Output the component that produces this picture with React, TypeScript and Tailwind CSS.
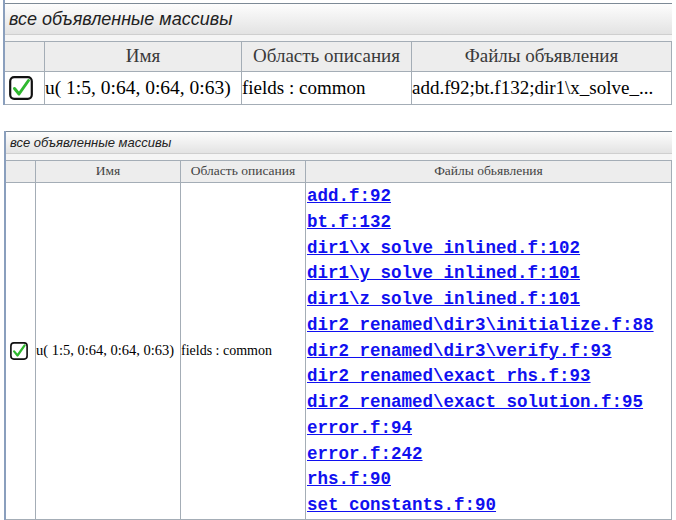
import React from "react";

const links = [
  "add.f:92",
  "bt.f:132",
  "dir1\\x_solve_inlined.f:102",
  "dir1\\y_solve_inlined.f:101",
  "dir1\\z_solve_inlined.f:101",
  "dir2_renamed\\dir3\\initialize.f:88",
  "dir2_renamed\\dir3\\verify.f:93",
  "dir2_renamed\\exact_rhs.f:93",
  "dir2_renamed\\exact_solution.f:95",
  "error.f:94",
  "error.f:242",
  "rhs.f:90",
  "set_constants.f:90",
];

function Check({ size }: { size: number }) {
  return (
    <svg width={size} height={size} viewBox="0 0 24 24">
      <rect x="1.2" y="1.2" width="21.6" height="21.6" rx="4" fill="white" stroke="#111" strokeWidth="2.2" />
      <path d="M5.5 12.5 L10 18 L19.5 4.5" fill="none" stroke="#2fb82f" strokeWidth="3" strokeLinecap="round" strokeLinejoin="round" />
    </svg>
  );
}

export default function App() {
  return (
    <div className="w-[676px] h-[520px] bg-white overflow-hidden relative font-['Liberation_Serif',serif]">
      {/* Top panel */}
      <div className="ml-[3px] w-[669px] border-l-2 border-[#8a9fbd]">
        <div className="h-[3px] bg-white" />
        <div className="h-[31px] border-t border-[#7d8a96] bg-gradient-to-b from-[#fdfdfd] to-[#e3e3e3] flex items-center pl-[4px]">
          <span className="italic text-[18px] text-[#222] font-['Liberation_Sans',sans-serif]">
            все объявленные массивы
          </span>
        </div>
        <div className="h-[7px] border-t border-[#cfcfcf] bg-[#f5f5f5]" />
        <div className="grid grid-cols-[40px_197px_170px_260px] border-t border-[#a4adb6] font-['Liberation_Serif',serif]">
          <div className="h-[30px] bg-[#ededed] border-r border-b border-[#a4adb6]" />
          <div className="h-[30px] bg-[#ededed] border-r border-b border-[#a4adb6] flex items-center justify-center text-[19px] text-[#3a3a3a] font-['Liberation_Serif',serif]">Имя</div>
          <div className="h-[30px] bg-[#ededed] border-r border-b border-[#a4adb6] flex items-center justify-center text-[19px] text-[#3a3a3a] whitespace-nowrap overflow-hidden font-['Liberation_Serif',serif]">Область описания</div>
          <div className="h-[30px] bg-[#ededed] border-r border-b border-[#a4adb6] flex items-center justify-center text-[19px] text-[#3a3a3a] font-['Liberation_Serif',serif]">Файлы объявления</div>

          <div className="h-[33px] border-r border-b border-[#a4adb6] flex items-center pl-[4px]"><Check size={24} /></div>
          <div className="h-[33px] border-r border-b border-[#a4adb6] flex items-center text-[19.5px] text-black whitespace-nowrap overflow-hidden font-['Liberation_Serif',serif]">u( 1:5, 0:64, 0:64, 0:63)</div>
          <div className="h-[33px] border-r border-b border-[#a4adb6] flex items-center text-[19px] text-black whitespace-nowrap overflow-hidden font-['Liberation_Serif',serif]">fields : common</div>
          <div className="h-[33px] border-r border-b border-[#a4adb6] flex items-center text-[19px] text-black whitespace-nowrap overflow-hidden font-['Liberation_Serif',serif]">add.f92;bt.f132;dir1\x_solve_...</div>
        </div>
      </div>

      {/* Bottom panel */}
      <div className="mt-[26px] ml-[4px] w-[668px] border-l-2 border-[#8a9fbd]">
        <div className="h-[22px] border-t border-[#7d8a96] bg-gradient-to-b from-[#fdfdfd] to-[#e3e3e3] flex items-center pl-[4px]">
          <span className="italic text-[13px] text-[#222] font-['Liberation_Sans',sans-serif]">
            все объявленные массивы
          </span>
        </div>
        <div className="h-[7px] border-t border-[#cfcfcf] bg-[#f5f5f5]" />
        <div className="grid grid-cols-[30px_145px_125px_366px] border-t border-[#a4adb6] font-['Liberation_Serif',serif]">
          <div className="h-[22px] bg-[#ededed] border-r border-b border-[#a4adb6]" />
          <div className="h-[22px] bg-[#ededed] border-r border-b border-[#a4adb6] flex items-center justify-center text-[13.5px] text-[#444] font-['Liberation_Serif',serif]">Имя</div>
          <div className="h-[22px] bg-[#ededed] border-r border-b border-[#a4adb6] flex items-center justify-center text-[13.5px] text-[#444] whitespace-nowrap overflow-hidden font-['Liberation_Serif',serif]">Область описания</div>
          <div className="h-[22px] bg-[#ededed] border-r border-b border-[#a4adb6] flex items-center justify-center text-[13.5px] text-[#444] font-['Liberation_Serif',serif]">Файлы обьявления</div>

          <div className="border-r border-b border-[#a4adb6] flex items-center pl-[4px]"><Check size={18} /></div>
          <div className="border-r border-b border-[#a4adb6] flex items-center text-[14.5px] text-black whitespace-nowrap overflow-hidden font-['Liberation_Serif',serif]">u( 1:5, 0:64, 0:64, 0:63)</div>
          <div className="border-r border-b border-[#a4adb6] flex items-center text-[14px] text-black whitespace-nowrap overflow-hidden font-['Liberation_Serif',serif]">fields : common</div>
          <div className="border-r border-b border-[#a4adb6] flex flex-col pl-[1px] pt-[1px]">
            {links.map((l) => (
              <a
                key={l}
                href="#"
                className="block h-[25.75px] leading-[25.75px] text-[17.5px] font-bold text-[#1010f0] underline whitespace-nowrap font-['Liberation_Mono',monospace]"
              >
                {l}
              </a>
            ))}
          </div>
        </div>
      </div>
    </div>
  );
}
